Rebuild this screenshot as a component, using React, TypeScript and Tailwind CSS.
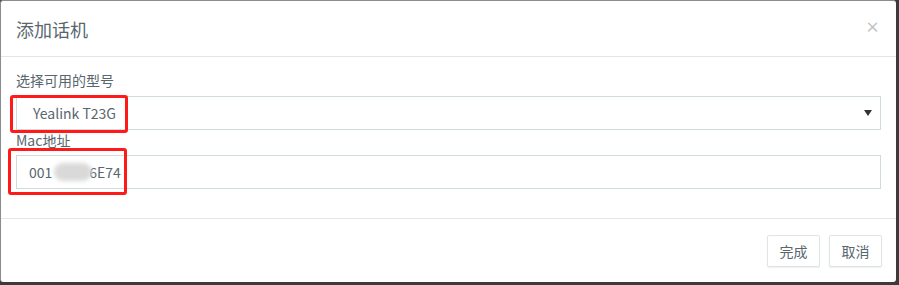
const font = { fontFamily: '"Noto Sans CJK SC", "Noto Sans", sans-serif' };

const RedMark = ({ className }: { className: string }) => (
  <div className={`pointer-events-none absolute rounded-[3px] border-[3px] border-[#ff1a1a] ${className}`} />
);

const App = () => {
  return (
    <div className="h-[285px] w-[899px] bg-[#3b3b3b]" style={font}>
      <div className="flex h-[282px] w-[896px] flex-col rounded-[3px] border-l border-t border-[#8c8c8c] bg-white text-[#58666e]">
        <div className="flex h-[56px] shrink-0 items-center justify-between border-b border-[#e5e5e5] pl-[15px] pr-[16px]">
          <h4 className="text-[18px] leading-[24px]">添加话机</h4>
          <button className="-mt-[4px] text-[15px] font-bold leading-none text-black/25">×</button>
        </div>

        <div className="flex flex-col px-[15px] pb-[29px] pt-[13px] text-[14px]">
          <label className="mb-[6px] leading-[20px]">选择可用的型号</label>
          <div className="relative">
            <div className="flex h-[34px] items-center justify-between border border-[#cfdadd] pl-[16px] pr-[8px]">
              <span>Yealink T23G</span>
              <svg width="8" height="6" viewBox="0 0 8 6">
                <path d="M0 0 H8 L4 6 Z" fill="#333" />
              </svg>
            </div>
            <RedMark className="-left-[6px] -top-[1px] h-[38px] w-[118px]" />
          </div>

          <label className="mb-[5px] leading-[20px]">Mac地址</label>
          <div className="relative">
            <div className="flex h-[34px] items-center border border-[#cfdadd] pl-[12px]">
              <span>001</span>
              <span className="relative inline-block h-[20px] w-[37px]">
                <span className="absolute -right-[3px] left-[2px] top-[1px] h-[18px] rounded-full bg-[#d9d9d9] blur-[2px]" />
              </span>
              <span>6E74</span>
            </div>
            <RedMark className="-left-[8px] -top-[7px] h-[47px] w-[119px]" />
          </div>
        </div>

        <div className="flex justify-end gap-[9px] border-t border-[#e5e5e5] pr-[14px] pt-[16px]">
          <button className="h-[32px] w-[53px] rounded-[2px] border border-[#dee5e7] bg-white text-[14px] shadow-[0_1px_1px_rgba(90,90,90,0.1)]">
            完成
          </button>
          <button className="h-[32px] w-[53px] rounded-[2px] border border-[#dee5e7] bg-white text-[14px] shadow-[0_1px_1px_rgba(90,90,90,0.1)]">
            取消
          </button>
        </div>
      </div>
    </div>
  );
};

export default App;
